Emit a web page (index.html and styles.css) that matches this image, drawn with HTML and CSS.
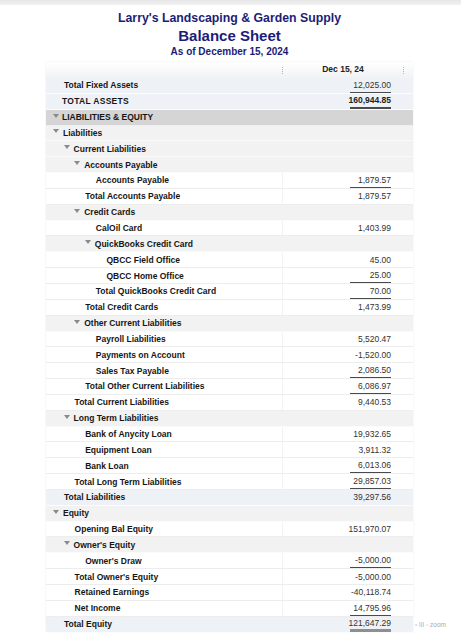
FILE: index.html
```html
<!DOCTYPE html>
<html>
<head>
<meta charset="utf-8">
<link rel="stylesheet" href="styles.css">
</head>
<body>
<div class="topbar"></div>
<div class="titles">
  <div class="t1">Larry's Landscaping &amp; Garden Supply</div>
  <div class="t2">Balance Sheet</div>
  <div class="t3">As of December 15, 2024</div>
</div>
<div class="sheet">
  <div class="hdr">
    <div class="hdr-label"></div>
    <span class="dots"></span>
    <div class="hdr-date">Dec 15, 24</div>
    <span class="dots"></span>
    <div class="hdr-end"></div>
  </div>

  <div class="row blue"><div class="label l0">Total Fixed Assets</div><div class="val"><span class="num ul">12,025.00</span></div></div>
  <div class="row blue"><div class="label caps">TOTAL ASSETS</div><div class="val"><span class="num bold dul">160,944.85</span></div></div>
  <div class="row dark"><div class="label s0 le"><i class="tri"></i>LIABILITIES &amp; EQUITY</div><div class="val"></div></div>
  <div class="row sec"><div class="label s0"><i class="tri"></i>Liabilities</div><div class="val"></div></div>
  <div class="row sec"><div class="label s1"><i class="tri"></i>Current Liabilities</div><div class="val"></div></div>
  <div class="row sec"><div class="label s2"><i class="tri"></i>Accounts Payable</div><div class="val"></div></div>
  <div class="row"><div class="label l3">Accounts Payable</div><div class="val"><span class="num ul">1,879.57</span></div></div>
  <div class="row"><div class="label l2">Total Accounts Payable</div><div class="val"><span class="num">1,879.57</span></div></div>
  <div class="row sec"><div class="label s2"><i class="tri"></i>Credit Cards</div><div class="val"></div></div>
  <div class="row"><div class="label l3">CalOil Card</div><div class="val"><span class="num">1,403.99</span></div></div>
  <div class="row sec"><div class="label s3"><i class="tri"></i>QuickBooks Credit Card</div><div class="val"></div></div>
  <div class="row"><div class="label l4">QBCC Field Office</div><div class="val"><span class="num">45.00</span></div></div>
  <div class="row"><div class="label l4">QBCC Home Office</div><div class="val"><span class="num ul">25.00</span></div></div>
  <div class="row"><div class="label l3">Total QuickBooks Credit Card</div><div class="val"><span class="num ul">70.00</span></div></div>
  <div class="row"><div class="label l2">Total Credit Cards</div><div class="val"><span class="num">1,473.99</span></div></div>
  <div class="row sec"><div class="label s2"><i class="tri"></i>Other Current Liabilities</div><div class="val"></div></div>
  <div class="row"><div class="label l3">Payroll Liabilities</div><div class="val"><span class="num">5,520.47</span></div></div>
  <div class="row"><div class="label l3">Payments on Account</div><div class="val"><span class="num">-1,520.00</span></div></div>
  <div class="row"><div class="label l3">Sales Tax Payable</div><div class="val"><span class="num ul">2,086.50</span></div></div>
  <div class="row"><div class="label l2">Total Other Current Liabilities</div><div class="val"><span class="num ul">6,086.97</span></div></div>
  <div class="row"><div class="label l1">Total Current Liabilities</div><div class="val"><span class="num">9,440.53</span></div></div>
  <div class="row sec"><div class="label s1"><i class="tri"></i>Long Term Liabilities</div><div class="val"></div></div>
  <div class="row"><div class="label l2">Bank of Anycity Loan</div><div class="val"><span class="num">19,932.65</span></div></div>
  <div class="row"><div class="label l2">Equipment Loan</div><div class="val"><span class="num">3,911.32</span></div></div>
  <div class="row"><div class="label l2">Bank Loan</div><div class="val"><span class="num ul">6,013.06</span></div></div>
  <div class="row"><div class="label l1">Total Long Term Liabilities</div><div class="val"><span class="num ul">29,857.03</span></div></div>
  <div class="row blue"><div class="label l0">Total Liabilities</div><div class="val"><span class="num">39,297.56</span></div></div>
  <div class="row sec"><div class="label s0"><i class="tri"></i>Equity</div><div class="val"></div></div>
  <div class="row"><div class="label l1">Opening Bal Equity</div><div class="val"><span class="num">151,970.07</span></div></div>
  <div class="row sec"><div class="label s1"><i class="tri"></i>Owner's Equity</div><div class="val"></div></div>
  <div class="row"><div class="label l2">Owner's Draw</div><div class="val"><span class="num ul">-5,000.00</span></div></div>
  <div class="row"><div class="label l1">Total Owner's Equity</div><div class="val"><span class="num">-5,000.00</span></div></div>
  <div class="row"><div class="label l1">Retained Earnings</div><div class="val"><span class="num">-40,118.74</span></div></div>
  <div class="row"><div class="label l1">Net Income</div><div class="val"><span class="num ul">14,795.96</span></div></div>
  <div class="row blue"><div class="label l0">Total Equity</div><div class="val"><span class="num dul gray">121,647.29</span></div></div>
</div>
<div class="zoom">▫ ǀǀǀ ◦ zoom</div>
</body>
</html>
```

FILE: styles.css
```css
html, body {
  margin: 0;
  padding: 0;
  height: 633px;
  overflow: hidden;
  background: #fff;
  font-family: "Liberation Sans", Arial, sans-serif;
  color: #1a1a1a;
}

.topbar {
  height: 5px;
  background: linear-gradient(#e6e6e6, #f2f2f2);
}

.titles {
  padding-top: 6px;
  text-align: center;
  color: #1c1c78;
  font-weight: bold;
  padding-right: 2px;
}

.t1 {
  font-size: 12.3px;
  line-height: 14px;
  margin-bottom: 2px;
}

.t2 {
  font-size: 15px;
  line-height: 18px;
}

.t3 {
  font-size: 10px;
  line-height: 12px;
  margin-top: 1px;
  margin-bottom: 4px;
}

.sheet {
  width: 367px;
  margin-left: 46px;
  box-shadow: 0 0 2px rgba(0, 0, 0, 0.08);
}

.hdr {
  height: 16px;
  display: flex;
  align-items: center;
  background: linear-gradient(#ffffff, #f1f2f4);
  font-size: 8.5px;
  font-weight: bold;
  color: #222;
}

.hdr-label {
  width: 236px;
  flex: none;
}

.dots {
  flex: none;
  width: 0;
  height: 7px;
  border-left: 1px dotted #b5b5b5;
}

.hdr-date {
  flex: 1;
  text-align: center;
  transform: translateY(-1px);
}

.hdr-end {
  width: 9px;
  flex: none;
}

.row {
  display: grid;
  grid-template-columns: 236px 131px;
  height: 15.85px;
  box-sizing: border-box;
  border-bottom: 1px solid #ededed;
  background: #fff;
}

.row.sec {
  background: #f2f2f2;
  border-bottom-color: #fbfbfb;
}

.row.blue {
  background: #eef2f7;
  border-bottom-color: #fbfcfd;
}

.row.dark {
  background: #d5d5d5;
  border-bottom-color: #eeeeee;
}

.label {
  display: flex;
  align-items: center;
  font-size: 8.5px;
  font-weight: bold;
  white-space: nowrap;
  color: #161616;
}

.l0 { padding-left: 18px; }
.l1 { padding-left: 28.6px; }
.l2 { padding-left: 39.2px; }
.l3 { padding-left: 49.8px; }
.l4 { padding-left: 60.4px; }

.s0 { padding-left: 7px; }
.s1 { padding-left: 17.6px; }
.s2 { padding-left: 28.2px; }
.s3 { padding-left: 38.8px; }

.caps {
  padding-left: 16px;
  letter-spacing: 0.3px;
}

.le { letter-spacing: 0; }

.tri {
  display: inline-block;
  width: 0;
  height: 0;
  border-left: 3.5px solid transparent;
  border-right: 3.5px solid transparent;
  border-top: 4px solid #8a8a8a;
  margin-right: 4px;
  margin-top: -3px;
}

.le .tri { margin-right: 3px; }

.val {
  display: flex;
  justify-content: flex-end;
  padding-right: 22px;
  border-left: 1px solid #f3f3f3;
}

.row.sec .val,
.row.blue .val,
.row.dark .val {
  border-left-color: transparent;
}

.num {
  width: 41px;
  height: 100%;
  box-sizing: border-box;
  display: flex;
  align-items: center;
  justify-content: flex-end;
  font-size: 8.5px;
  color: #333;
  white-space: nowrap;
}

.num.bold {
  font-weight: bold;
  color: #222;
}

.ul {
  border-bottom: 1px solid #4a4a4a;
}

.dul {
  border-bottom: 2px solid #4a4a4a;
}

.dul.gray {
  border-bottom: 3px solid #8f8f8f;
}

.zoom {
  position: absolute;
  left: 415px;
  top: 621px;
  font-size: 6.5px;
  color: #aaa;
  white-space: nowrap;
}
```
